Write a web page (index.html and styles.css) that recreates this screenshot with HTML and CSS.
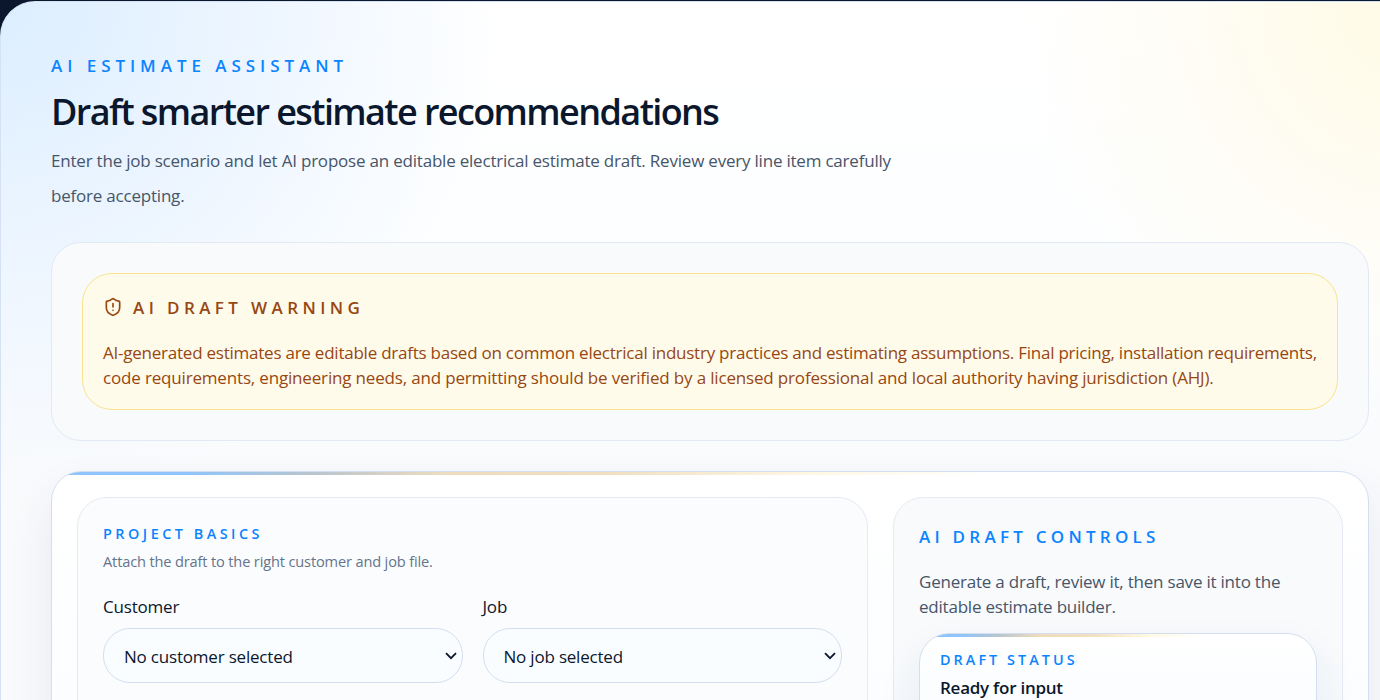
FILE: index.html
```html
<!DOCTYPE html>
<html lang="en">
<head>
    <meta charset="UTF-8">
    <meta name="viewport" content="width=device-width, initial-scale=1.0">
    <title>AI Estimate Assistant</title>
    <link rel="stylesheet" href="styles.css">
</head>
<body>
    <main class="page-shell">
        <header class="page-header">
            <p class="eyebrow">AI Estimate Assistant</p>
            <h1>Draft smarter estimate recommendations</h1>
            <p class="intro">Enter the job scenario and let AI propose an editable electrical estimate draft. Review every line item carefully<br>before accepting.</p>
        </header>

        <section class="notice">
            <div class="warning">
                <h2 class="warning-title">
                    <svg class="shield" viewBox="0 0 24 24" fill="none" stroke="currentColor" stroke-width="2" stroke-linecap="round" stroke-linejoin="round">
                        <path d="M20 13c0 5-3.5 7.5-7.66 8.95a1 1 0 0 1-.67-.01C7.5 20.5 4 18 4 13V6a1 1 0 0 1 1-1c2 0 4.5-1.2 6.24-2.72a1.17 1.17 0 0 1 1.52 0C14.51 3.81 17 5 19 5a1 1 0 0 1 1 1z"/>
                        <path d="M12 8v4"/>
                        <path d="M12 16h.01"/>
                    </svg>
                    <span>AI Draft Warning</span>
                </h2>
                <p class="warning-text"><span class="line-one">AI-generated estimates are editable drafts based on common electrical industry practices and estimating assumptions. Final pricing, installation requirements,</span><br>code requirements, engineering needs, and permitting should be verified by a licensed professional and local authority having jurisdiction (AHJ).</p>
            </div>
        </section>

        <section class="card workspace">
            <div class="panel basics">
                <h3 class="label-heading">Project Basics</h3>
                <p class="hint">Attach the draft to the right customer and job file.</p>
                <div class="fields">
                    <div class="field">
                        <label for="customer">Customer</label>
                        <div class="select-wrap">
                            <select id="customer">
                                <option>No customer selected</option>
                            </select>
                            <svg class="chevron" viewBox="0 0 12 8" fill="none" stroke="currentColor" stroke-width="1.8"><path d="M1 1.2l5 5 5-5"/></svg>
                        </div>
                    </div>
                    <div class="field">
                        <label for="job">Job</label>
                        <div class="select-wrap">
                            <select id="job">
                                <option>No job selected</option>
                            </select>
                            <svg class="chevron" viewBox="0 0 12 8" fill="none" stroke="currentColor" stroke-width="1.8"><path d="M1 1.2l5 5 5-5"/></svg>
                        </div>
                    </div>
                </div>
            </div>

            <aside class="panel controls">
                <h2 class="controls-title">AI Draft Controls</h2>
                <p class="controls-text">Generate a draft, review it, then save it into the<br>editable estimate builder.</p>
                <div class="card status">
                    <h3 class="label-heading">Draft Status</h3>
                    <p class="status-value">Ready for input</p>
                </div>
            </aside>
        </section>
    </main>
</body>
</html>
```

FILE: styles.css
```css
* {
    margin: 0;
    padding: 0;
    box-sizing: border-box;
}

body {
    height: 700px;
    padding-top: 1px;
    overflow: hidden;
    background: #0b172c;
    color: #0b172c;
    font-family: "Open Sans", "Noto Sans", sans-serif;
    font-size: 17px;
    line-height: 25px;
    letter-spacing: -0.2px;
}

.page-shell {
    width: 1420px;
    height: 1100px;
    padding: 50px;
    border: 1px solid #d5e2f4;
    border-radius: 35px;
    background:
        radial-gradient(circle at 0 0, #dceeff 0, rgba(236, 245, 255, 0.9) 270px, rgba(255, 255, 255, 0) 500px),
        radial-gradient(circle at 100% 0, #fffae4 0, rgba(255, 252, 240, 0.8) 200px, rgba(255, 255, 255, 0) 400px),
        linear-gradient(180deg, #fff 0, #fdfeff 250px, #f9fafc 500px);
}

.eyebrow,
.warning-title,
.controls-title {
    font-size: 17px;
    font-weight: 600;
    line-height: 25px;
    letter-spacing: 4.4px;
    text-transform: uppercase;
}

.eyebrow,
.controls-title,
.label-heading {
    color: #0a84ff;
}

.eyebrow {
    padding-top: 1px;
    letter-spacing: 4.95px;
}

h1 {
    margin-top: 11px;
    font-size: 36px;
    font-weight: 600;
    line-height: 45px;
    letter-spacing: -1.6px;
}

.intro {
    margin-top: 9px;
    color: #475569;
    line-height: 35px;
    letter-spacing: -0.21px;
}

.notice {
    margin-top: 29px;
    padding: 30px;
    border: 1px solid #e3e9f4;
    border-radius: 30px;
    background: #f8fafc;
}

.warning {
    height: 137px;
    padding: 20px;
    border: 1px solid #fae38c;
    border-radius: 30px;
    background: #fffbeb;
    color: #974712;
    white-space: nowrap;
}

.warning-title {
    display: flex;
    align-items: center;
    gap: 10px;
    height: 26px;
}

.shield {
    width: 20px;
    height: 20px;
}

.warning-text {
    margin-top: 20px;
    letter-spacing: -0.17px;
}

.line-one {
    letter-spacing: -0.235px;
}

.card {
    border: 1px solid #d3dff0;
    border-radius: 30px;
    background:
        linear-gradient(90deg, #8ec4fb 10%, #b9c5cd 20%, #eedcbe 30%, #f0dfc0 42%, #fff8e4 58%, transparent 72%) top / 100% 3px no-repeat,
        linear-gradient(180deg, #fff, #f8fbff);
    box-shadow: 0 22px 45px rgba(30, 70, 130, 0.09);
}

.workspace {
    display: grid;
    grid-template-columns: 791px 450px;
    gap: 25px;
    height: 560px;
    margin-top: 30px;
    padding: 25px;
}

.panel {
    padding: 26px 25px 25px;
    border: 1px solid #e5eaf3;
    border-radius: 30px;
    background: #fbfcfe;
}

.controls {
    background: #f8fafc;
}

.label-heading {
    font-size: 14.4px;
    font-weight: 600;
    line-height: 20px;
    letter-spacing: 3.5px;
    text-transform: uppercase;
}

.hint {
    margin-top: 7px;
    color: #64748b;
    font-size: 14.6px;
    line-height: 20px;
    letter-spacing: -0.15px;
}

.fields {
    display: grid;
    grid-template-columns: 1fr 1fr;
    gap: 20px;
    margin-top: 23px;
}

.field label {
    display: block;
}

.select-wrap {
    display: grid;
    align-items: center;
    margin-top: 9px;
}

.select-wrap select,
.chevron {
    grid-area: 1 / 1;
}

.select-wrap select {
    width: 100%;
    height: 55px;
    padding: 1px 20px 0;
    appearance: none;
    border: 1px solid #d3dff0;
    border-radius: 27px;
    background: #fafdff;
    color: #0b172c;
    font: inherit;
    letter-spacing: inherit;
}

.chevron {
    justify-self: end;
    width: 12px;
    height: 8px;
    margin-right: 6px;
    pointer-events: none;
}

.controls-title {
    letter-spacing: 4.25px;
}

.controls-text {
    margin-top: 20px;
    color: #475569;
    letter-spacing: -0.22px;
}

.status {
    height: 120px;
    margin-top: 14px;
    padding: 16px 20px;
}

.status .label-heading {
    letter-spacing: 3.05px;
}

.status-value {
    margin-top: 5px;
    font-weight: 600;
    letter-spacing: -0.25px;
}
```
